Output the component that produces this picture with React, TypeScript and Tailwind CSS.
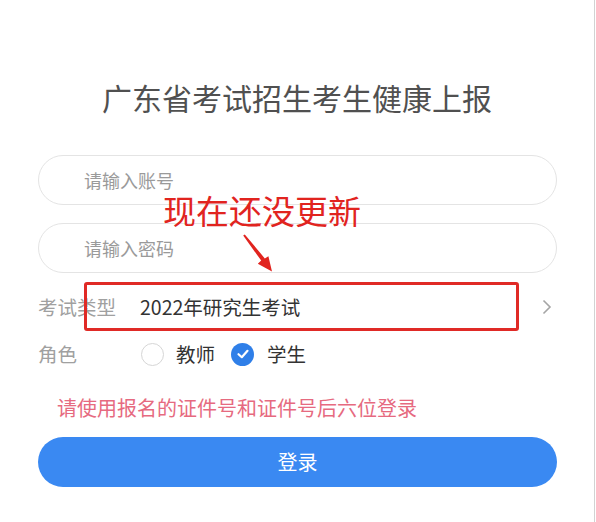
import React from "react";

const font = "font-['Noto_Sans_CJK_SC','Noto_Sans',sans-serif]";

function Radio({ checked }: { checked?: boolean }) {
  if (checked) {
    return (
      <span className="flex h-[23px] w-[23px] items-center justify-center rounded-full bg-[#2f7fe8]">
        <svg width="14" height="14" viewBox="0 0 14 14">
          <path d="M2.5 7.2 L5.8 10.2 L11.5 3.8" fill="none" stroke="#fff" strokeWidth="2.2" strokeLinecap="round" strokeLinejoin="round" />
        </svg>
      </span>
    );
  }
  return <span className="h-[23px] w-[23px] rounded-full border border-[#d6d6d6]" />;
}

export default function App() {
  return (
    <div className={`relative h-[522px] w-[596px] bg-white ${font}`}>
      <div className="h-[522px] w-[595px] border-r border-[#d2d2d2]">
        <div className="px-[38px] pt-[77px]">
          <h1 className="h-[40px] text-center text-[30px] leading-[40px] font-normal text-[#505050]">
            广东省考试招生考生健康上报
          </h1>
          <div className="mt-[38px] flex h-[50px] w-[519px] items-center rounded-full border border-[#e4e4e4] pl-[45px] text-[18px] text-[#9a9a9a]">
            请输入账号
          </div>
          <div className="mt-[18px] flex h-[50px] w-[519px] items-center rounded-full border border-[#e4e4e4] pl-[45px] text-[18px] text-[#9a9a9a]">
            请输入密码
          </div>
          <div className="mt-[10px] flex h-[48px] w-[519px] items-center text-[19.5px]">
            <span className="w-[102px] text-[#a0a0a0]">考试类型</span>
            <span className="flex-1 text-[#333]">2022年研究生考试</span>
            <svg width="10" height="16" viewBox="0 0 10 16" className="mr-[5px]">
              <path d="M1.5 1.5 L8 8 L1.5 14.5" fill="none" stroke="#a5a5a5" strokeWidth="1.6" />
            </svg>
          </div>
          <div className="flex h-[46px] items-center text-[19.5px]">
            <span className="w-[103px] text-[#a0a0a0]">角色</span>
            <Radio />
            <span className="ml-[12px] text-[#333]">教师</span>
            <span className="ml-[16px]">
              <Radio checked />
            </span>
            <span className="ml-[13px] text-[#333]">学生</span>
          </div>
          <p className="mt-[17px] h-[28px] pl-[19px] text-[20px] leading-[28px] text-[#e66a80]">
            请使用报名的证件号和证件号后六位登录
          </p>
          <button className="mt-[15px] flex h-[50px] w-[519px] items-center justify-center rounded-full bg-[#3a89f2] text-[20px] text-white">
            登录
          </button>
        </div>
      </div>

      {/* annotation overlay */}
      <div className="absolute left-[163px] top-[192px] text-[33px] leading-[36px] font-normal text-[#e1241f]">
        现在还没更新
      </div>
      <svg className="absolute left-0 top-0" width="596" height="522" viewBox="0 0 596 522">
        <polygon
          points="243.2,235.6 261.2,260.6 257.8,263.8 272,271.5 268.4,256.3 264.8,258.4 244.8,234.4"
          fill="#e1241f"
        />
      </svg>
      <div className="absolute left-[84px] top-[282px] h-[49px] w-[435px] rounded-[3px] border-[3px] border-[#e02a26]" />
    </div>
  );
}
